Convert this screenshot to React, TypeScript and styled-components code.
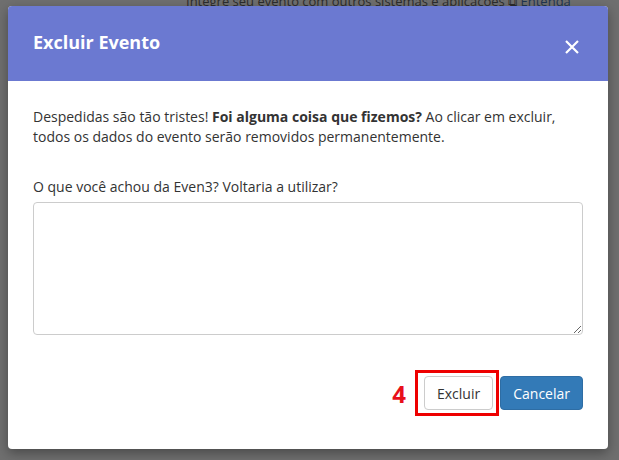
import React from "react";
import styled, { createGlobalStyle } from "styled-components";

const GlobalStyle = createGlobalStyle`
  html, body {
    margin: 0;
    padding: 0;
    background: #6e6e6e;
    font-family: "Open Sans", "Liberation Sans", sans-serif;
  }
`;

const Backdrop = styled.div`
  position: relative;
  width: 619px;
  height: 460px;
  overflow: hidden;
  background: #6f6f6f;
  padding: 6px 0 0 8px;
  box-sizing: border-box;
`;

const BehindText = styled.div`
  position: absolute;
  top: -8px;
  left: 186px;
  font-size: 13px;
  color: #2c2c2c;
  white-space: nowrap;
  span {
    color: #1f3550;
  }
`;

const Modal = styled.div`
  position: relative;
  width: 600px;
  height: 443px;
  background: #fff;
  border-radius: 4px;
  box-shadow: 0 4px 12px rgba(0, 0, 0, 0.35);
  display: flex;
  flex-direction: column;
  overflow: hidden;
`;

const Header = styled.div`
  height: 75px;
  background: #6b79d1;
  display: flex;
  align-items: center;
  justify-content: space-between;
  padding: 0 29px 0 25px;
  box-sizing: border-box;
`;

const Title = styled.h4`
  margin: -4px 0 0;
  color: #fff;
  font-size: 18px;
  font-weight: 700;
`;

const Close = styled.button`
  border: none;
  background: none;
  padding: 0;
  margin-top: 6px;
  cursor: pointer;
  display: flex;
`;

const Body = styled.div`
  padding: 26px 25px 0;
  flex: 1;
  color: #333;
  font-size: 14px;
  line-height: 19.5px;
`;

const Lead = styled.p`
  margin: 0 0 31px;
`;

const Label = styled.label`
  display: block;
  margin-bottom: 5px;
`;

const TextArea = styled.textarea`
  display: block;
  width: 100%;
  height: 133px;
  box-sizing: border-box;
  border: 1px solid #ccc;
  border-radius: 4px;
  font: inherit;
  padding: 6px 12px;
`;

const Footer = styled.div`
  display: flex;
  justify-content: flex-end;
  align-items: center;
  gap: 7px;
  padding: 0 25px 39px;
`;

const Step = styled.span`
  color: #e8101a;
  font-weight: 700;
  font-size: 24px;
  margin-right: 2px;
`;

const Highlight = styled.div`
  border: 3px solid #ee0000;
  padding: 3px 3px 3px 6px;
  margin: -6px -6px -6px 0;
`;

const Button = styled.button<{ $primary?: boolean }>`
  height: 34px;
  padding: 0 12px;
  border-radius: 4px;
  font: inherit;
  font-size: 14px;
  cursor: pointer;
  border: 1px solid ${(p) => (p.$primary ? "#2e6da4" : "#ccc")};
  background: ${(p) => (p.$primary ? "#337ab7" : "#fff")};
  color: ${(p) => (p.$primary ? "#fff" : "#333")};
`;

const App = (): JSX.Element => {
  return (
    <React.Fragment>
      <GlobalStyle />
      <Backdrop>
        <BehindText>
          Integre seu evento com outros sistemas e aplicações ⧉ <span>Entenda</span>
        </BehindText>
        <Modal>
          <Header>
            <Title>Excluir Evento</Title>
            <Close aria-label="Fechar">
              <svg width="14" height="14" viewBox="0 0 14 14">
                <path d="M1 1L13 13M13 1L1 13" stroke="#fff" strokeWidth="2.2" />
              </svg>
            </Close>
          </Header>
          <Body>
            <Lead>
              Despedidas são tão tristes! <b>Foi alguma coisa que fizemos?</b> Ao clicar em excluir,
              todos os dados do evento serão removidos permanentemente.
            </Lead>
            <Label>O que você achou da Even3? Voltaria a utilizar?</Label>
            <TextArea />
          </Body>
          <Footer>
            <Step>4</Step>
            <Highlight>
              <Button>Excluir</Button>
            </Highlight>
            <Button $primary>Cancelar</Button>
          </Footer>
        </Modal>
      </Backdrop>
    </React.Fragment>
  );
};

export default App;
